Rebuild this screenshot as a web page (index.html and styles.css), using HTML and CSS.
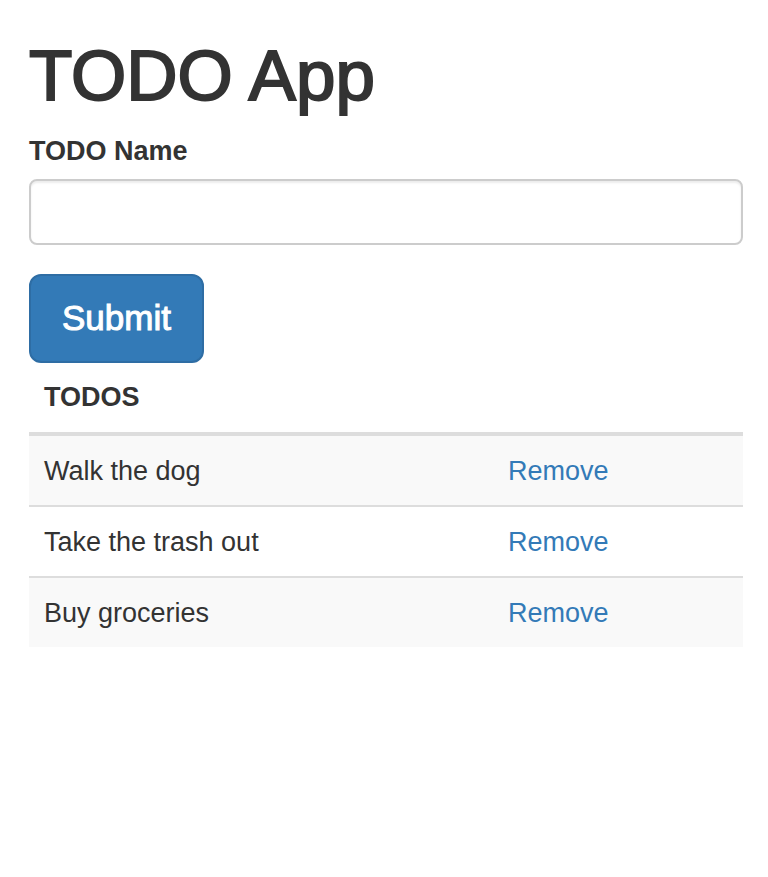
FILE: index.html
```html
<!DOCTYPE html>
<html lang="en">
<head>
<meta charset="utf-8">
<meta name="viewport" content="width=device-width, initial-scale=1">
<title>TODO App</title>
<link rel="stylesheet" href="styles.css">
</head>
<body>
<main class="container">
  <h1 class="title">TODO App</h1>
  <form class="todo-form">
    <label class="field-label" for="todo-name">TODO Name</label>
    <input class="field" id="todo-name" type="text">
    <button class="submit" type="submit">Submit</button>
  </form>
  <table class="todos">
    <thead>
      <tr><th class="name-col" scope="col">TODOS</th><td></td></tr>
    </thead>
    <tbody>
      <tr><td>Walk the dog</td><td><a href="#">Remove</a></td></tr>
      <tr><td>Take the trash out</td><td><a href="#">Remove</a></td></tr>
      <tr><td>Buy groceries</td><td><a href="#">Remove</a></td></tr>
    </tbody>
  </table>
</main>
</body>
</html>
```
FILE: styles.css
```css
* {
  box-sizing: border-box;
}

body {
  margin: 0;
  background: #fff;
  color: #333;
  font-family: "Liberation Sans", Arial, sans-serif;
  font-size: 27px;
  line-height: 39px;
}

.container {
  padding: 37px 25px 0 29px;
}

.title {
  margin: 0 0 18px;
  font-size: 71px;
  font-weight: 500;
  line-height: 77px;
  -webkit-text-stroke: 2px #333;
}

.todo-form {
  display: flex;
  flex-direction: column;
  align-items: flex-start;
}

.field-label {
  margin-bottom: 8px;
  font-weight: 700;
}

.field {
  width: 100%;
  height: 66px;
  margin-bottom: 29px;
  padding: 12px 23px;
  border: 2px solid #ccc;
  border-radius: 8px;
  background: #fff;
  box-shadow: inset 0 2px 2px rgba(0, 0, 0, 0.075);
  color: #555;
  font: inherit;
}

.submit {
  height: 89px;
  padding: 0 31px 3px;
  border: 2px solid #2e6da4;
  border-radius: 12px;
  background: #337ab7;
  color: #fff;
  font: inherit;
  font-size: 35px;
  -webkit-text-stroke: 1px #fff;
}

.todos {
  width: 100%;
  border-collapse: collapse;
}

.todos th,
.todos td {
  padding: 15px;
  text-align: left;
}

.todos tbody td {
  padding: 16px 15px 14px;
}

.todos thead tr {
  border-bottom: 4px solid #ddd;
}

.todos tbody tr + tr {
  border-top: 2px solid #ddd;
}

.todos tbody tr:nth-child(odd) {
  background: #f9f9f9;
}

.name-col {
  width: 65%;
}

.todos a {
  color: #337ab7;
  text-decoration: none;
}
```
